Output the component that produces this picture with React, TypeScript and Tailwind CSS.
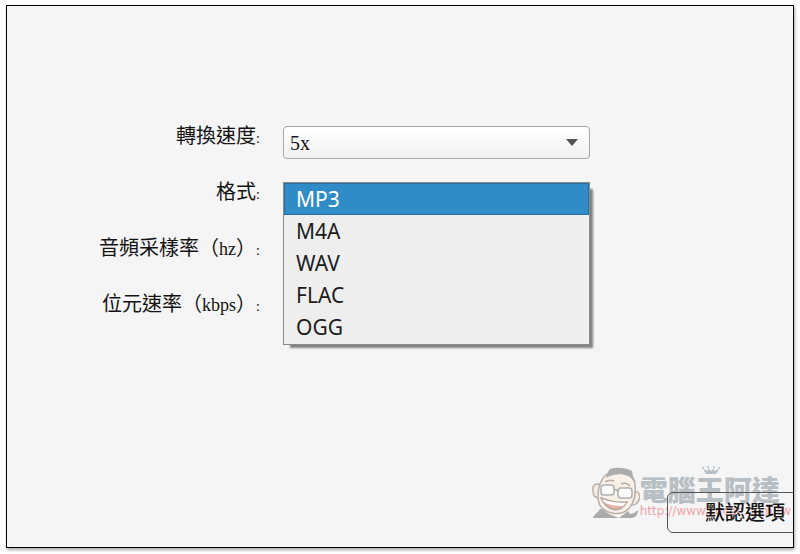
import { useState } from 'react';

const FORMATS = ['MP3', 'M4A', 'WAV', 'FLAC', 'OGG'];

const labelClass = 'h-14 w-full pt-px text-right text-[20px] leading-7 text-[#141414]';
const selectClass =
  'h-[33px] w-full appearance-none rounded border border-[#a6a6a6] bg-linear-to-b from-white to-[#f1f1f1] pl-1.5 pr-8 text-[20px] text-[#141414]';

const Mascot = () => (
  <svg viewBox="0 0 48 52" className="h-[52px] w-12 shrink-0" aria-hidden="true">
    <path d="M1 51C2 47 6 46 8 42L11 42C15 47 22 49 27 51ZM27 51L36 44L38 47L42 46L46 43C46 48 43 51 39 51Z" fill="#ababab" />
    <path d="M9 18C3 15 0 19 1 24C1 29 4 32 8 30Z" fill="#f7ece2" stroke="#b9b1ab" strokeWidth="1.5" />
    <path d="M41 26C46 22 49 28 47 33C45 38 41 39 38 37Z" fill="#f7ece2" stroke="#b9b1ab" strokeWidth="1.5" />
    <path
      d="M10 13C13 6 20 4 28 5C37 6 43 10 43 18C44 25 43 31 40 37C36 45 28 48 20 46C11 44 6 38 6 30C6 23 7 18 10 13Z"
      fill="#f9f0e8"
      stroke="#b9b1ab"
      strokeWidth="1.5"
    />
    <path d="M14 11C15 8 16 4 18 2C24 0 33 0 40 4L42 15C40 12 39 10 36 9C29 6 20 7 14 11Z" fill="#acacac" />
    <path d="M13 15Q17 12 22 14M29 17Q34 15 38 19" stroke="#b5aaa2" strokeWidth="1.5" fill="none" />
    <rect x="9" y="18" width="13" height="10" rx="3" fill="#fcfcfc" stroke="#b0b0b0" strokeWidth="1.5" />
    <rect x="26" y="21" width="14" height="10" rx="3" fill="#fcfcfc" stroke="#b0b0b0" strokeWidth="1.5" />
    <path d="M22 22L26 24" stroke="#b0b0b0" strokeWidth="1.5" />
    <path d="M9 31C17 34 26 36 35 35C32 41 26 44 20 42C14 40 11 36 9 31Z" fill="#e8afa4" stroke="#b5aaa2" strokeWidth="1.5" />
    <path d="M10 32C18 35 26 36 34 36L31 39C24 39 16 38 12 35Z" fill="#fff" />
  </svg>
);

const Crown = () => (
  <svg viewBox="0 0 20 10" className="absolute left-[61px] top-0.5 h-2.5 w-5" aria-hidden="true">
    <path d="M5 9L2 4L7 6L7 3L10 6L13 3L13 6L18 4L15 9Z" fill="#b7bec3" />
    <g fill="#b7bec3">
      <circle cx="2" cy="3" r="1" />
      <circle cx="7" cy="2" r="1" />
      <circle cx="13" cy="2" r="1" />
      <circle cx="18" cy="3" r="1" />
    </g>
  </svg>
);

const Watermark = () => (
  <div className="pointer-events-none absolute bottom-7 right-0.5 flex items-end" aria-hidden="true">
    <Mascot />
    <div className="relative pt-3">
      <Crown />
      <p className="whitespace-nowrap text-[28px] font-black leading-7 text-[#b8bfc4] font-['Noto_Sans_CJK_TC',sans-serif]">電腦王阿達</p>
      <p className="text-[12px] leading-4 text-[#efa3ac] font-['DejaVu_Sans',sans-serif]">http://www.kocpc.com.tw</p>
    </div>
  </div>
);

const App = () => {
  const [speed, setSpeed] = useState('5x');
  const [format, setFormat] = useState('MP3');

  return (
    <div className="h-screen bg-white px-1.5 pb-1.5 pt-[5px] font-['Liberation_Serif','Noto_Sans_CJK_TC',serif]">
      <main className="relative h-full overflow-hidden border border-black bg-[#f5f5f5] shadow-[1px_2px_3px_#aaa]">
        <form className="grid grid-cols-[253px_minmax(0,307px)] gap-x-[23px] pr-6 pt-[115px]">
          <label htmlFor="speed" className={labelClass}>
            轉換速度<span className="text-sm">:</span>
          </label>
          <div className="relative h-14 pt-[5px]">
            <select id="speed" value={speed} onChange={(e) => setSpeed(e.target.value)} className={selectClass}>
              <option>1x</option>
              <option>2x</option>
              <option>5x</option>
            </select>
            <svg viewBox="0 0 12 7" className="pointer-events-none absolute right-3 top-[18px] h-[7px] w-3" aria-hidden="true">
              <path d="M0 0H12L6 7Z" fill="#555" />
            </svg>
          </div>

          <label htmlFor="format" className={labelClass}>
            格式<span className="text-sm">:</span>
          </label>
          <div className="relative h-14 pt-[5px]">
            <select id="format" value={format} onChange={(e) => setFormat(e.target.value)} className={selectClass}>
              {FORMATS.map((item) => (
                <option key={item}>{item}</option>
              ))}
            </select>
            {/* Open format menu */}
            <ul
              role="listbox"
              aria-label="格式"
              className="absolute inset-x-0 top-[5px] border border-[#8a8a8a] bg-[#eee] pb-px font-['Noto_Sans',sans-serif] text-[21px] leading-8 text-[#1c1c1c] shadow-[5px_5px_2px_-2px_#808080]"
            >
              {FORMATS.map((item) => (
                <li
                  key={item}
                  role="option"
                  aria-selected={item === format}
                  onClick={() => setFormat(item)}
                  className={item === format ? 'h-8 border border-[#276f9e] bg-[#308cc6] pl-[11px] leading-[30px] text-white' : 'h-8 pl-3'}
                >
                  {item}
                </li>
              ))}
            </ul>
          </div>

          <span className={`${labelClass} col-start-1`}>
            音頻采樣率（<span className="text-lg">hz</span>）<span className="text-sm">:</span>
          </span>
          <span className={`${labelClass} col-start-1`}>
            位元速率（<span className="text-lg">kbps</span>）<span className="text-sm">:</span>
          </span>
        </form>

        <Watermark />
        <div className="absolute -right-2 bottom-3.5">
          <button type="button" className="h-[41px] w-[134px] rounded-md border border-[#555] pl-[22px] text-[20px] font-medium text-[#141414]">
            默認選項
          </button>
        </div>
      </main>
    </div>
  );
};

export default App;
